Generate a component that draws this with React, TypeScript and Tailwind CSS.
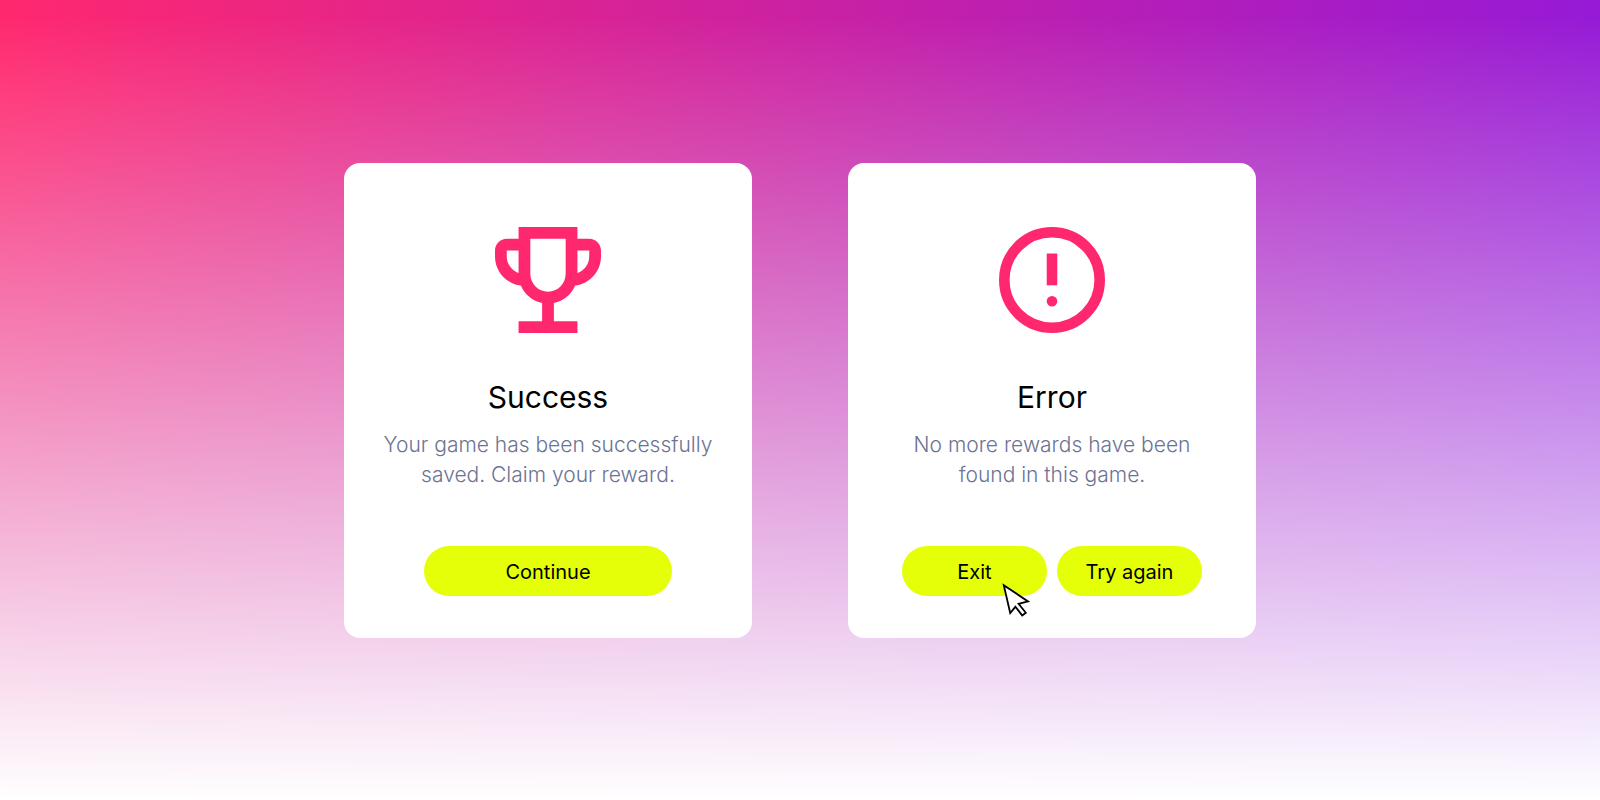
import type { ReactNode } from "react";

function TrophyIcon() {
  return (
    <svg viewBox="3 3 18 18" className="size-[106px] fill-[#ff286f]" aria-hidden="true">
      <path d="M19 5h-2V3H7v2H5c-1.1 0-2 .9-2 2v1c0 2.55 1.92 4.63 4.39 4.94.63 1.5 1.98 2.63 3.61 2.96V19H7v2h10v-2h-4v-3.1c1.63-.33 2.98-1.46 3.61-2.96C19.08 12.63 21 10.55 21 8V7c0-1.1-.9-2-2-2zM5 8V7h2v3.82C5.84 10.4 5 9.3 5 8zm7 6c-1.65 0-3-1.35-3-3V5h6v6c0 1.65-1.35 3-3 3zm7-6c0 1.3-.84 2.4-2 2.82V7h2v1z" />
    </svg>
  );
}

function AlertIcon() {
  return (
    <svg viewBox="2 2 20 20" className="size-[106px] fill-[#ff286f]" aria-hidden="true">
      <circle cx="12" cy="12" r="9" fill="none" stroke="#ff286f" strokeWidth="2" />
      <path d="M11 7h2v6h-2z" />
      <circle cx="12" cy="16" r="1" />
    </svg>
  );
}

function Cursor() {
  return (
    <svg
      viewBox="0 0 32 36"
      className="pointer-events-none absolute top-[35px] left-[99px] h-9 w-8"
      aria-hidden="true"
    >
      <path
        d="M2.8 4.2L27 20.4L17.6 22.8L24.8 31.8L21.2 34.4L14.4 25.8L9.2 32Z"
        fill="#fff"
        stroke="#000"
        strokeWidth="1.8"
      />
    </svg>
  );
}

function Card({ icon, title, text, children }: { icon: ReactNode; title: string; text: string; children: ReactNode }) {
  return (
    <section className="flex w-full max-w-[408px] flex-col items-center rounded-2xl bg-white px-6 pt-16 pb-[42px] text-center">
      {icon}
      <h2 className="mt-[46px] text-[30px] leading-9 text-black">{title}</h2>
      <p className="mt-[15px] text-[21px] leading-[30px] font-light whitespace-pre-line text-[#6b7394]">{text}</p>
      <div className="mt-14 flex justify-center gap-2.5">{children}</div>
    </section>
  );
}

function PillButton({ wide = false, children }: { wide?: boolean; children: ReactNode }) {
  return (
    <button
      type="button"
      className={`h-[50px] cursor-pointer rounded-full bg-[#e4ff07] pt-0.5 text-xl text-black ${wide ? "w-[248px]" : "w-[145px]"}`}
    >
      {children}
    </button>
  );
}

export default function App() {
  return (
    <main className="flex min-h-screen flex-wrap items-center justify-center gap-24 bg-[linear-gradient(to_bottom,rgba(255,255,255,0)_2%,#fff),linear-gradient(to_bottom,rgba(100,20,245,0)_12%,rgba(100,20,245,0.3)),linear-gradient(to_right,#ff286f,#961ad6)] p-6 font-['Inter',sans-serif]">
      <Card icon={<TrophyIcon />} title="Success" text={"Your game has been successfully\nsaved. Claim your reward."}>
        <PillButton wide>Continue</PillButton>
      </Card>
      <Card icon={<AlertIcon />} title="Error" text={"No more rewards have been\nfound in this game."}>
        <div className="relative">
          <PillButton>Exit</PillButton>
          <Cursor />
        </div>
        <PillButton>Try again</PillButton>
      </Card>
    </main>
  );
}
